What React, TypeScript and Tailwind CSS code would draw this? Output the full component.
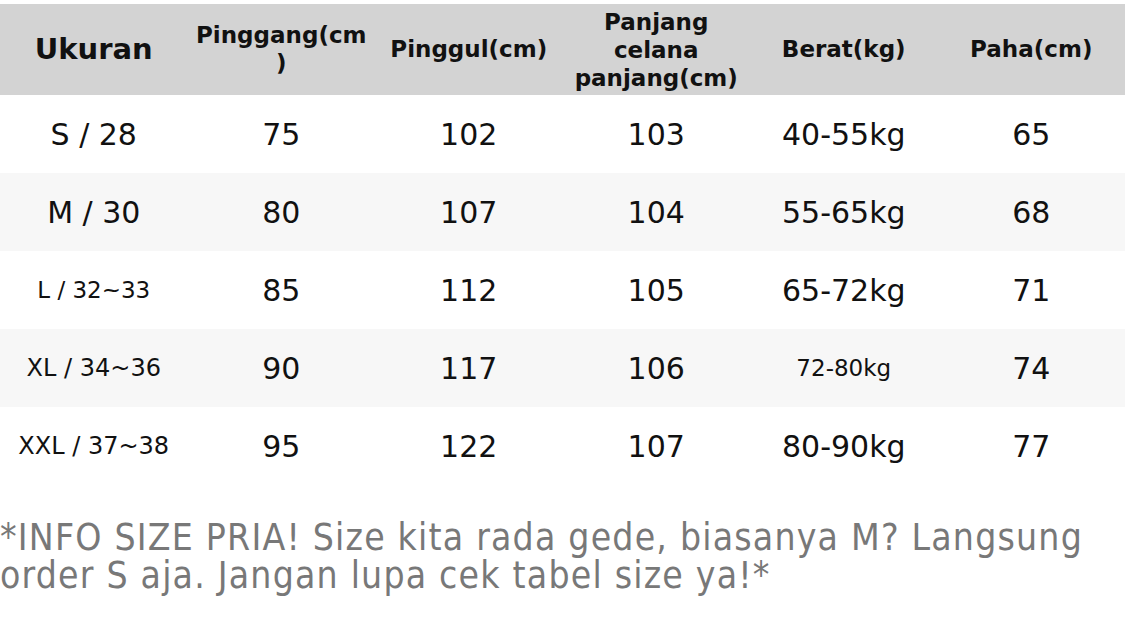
import React from "react";

const rows: { size: string; sizeCls: string; w: string; h: string; l: string; b: string; bCls: string; p: string }[] = [
  { size: "S / 28", sizeCls: "text-[30px]", w: "75", h: "102", l: "103", b: "40-55kg", bCls: "text-[30px]", p: "65" },
  { size: "M / 30", sizeCls: "text-[30px]", w: "80", h: "107", l: "104", b: "55-65kg", bCls: "text-[30px]", p: "68" },
  { size: "L / 32~33", sizeCls: "text-[23px]", w: "85", h: "112", l: "105", b: "65-72kg", bCls: "text-[30px]", p: "71" },
  { size: "XL / 34~36", sizeCls: "text-[24px]", w: "90", h: "117", l: "106", b: "72-80kg", bCls: "text-[23px]", p: "74" },
  { size: "XXL / 37~38", sizeCls: "text-[24px]", w: "95", h: "122", l: "107", b: "80-90kg", bCls: "text-[30px]", p: "77" },
];

export default function App() {
  return (
    <div className="w-[1125px] h-[625px] bg-white overflow-hidden" style={{ fontFamily: '"DejaVu Sans", sans-serif' }}>
      <div className="pt-[4px]">
        <div className="grid grid-cols-6 h-[91px] bg-[#d3d3d3] text-[#111] font-bold items-center text-center">
          <div className="text-[29px]">Ukuran</div>
          <div className="text-[23px] leading-[28px] whitespace-nowrap -mt-[2px]">Pinggang(cm<br />)</div>
          <div className="text-[23px]">Pinggul(cm)</div>
          <div className="text-[23px] leading-[28px]">Panjang<br />celana<br />panjang(cm)</div>
          <div className="text-[23px]">Berat(kg)</div>
          <div className="text-[23px]">Paha(cm)</div>
        </div>
        {rows.map((r, i) => (
          <div key={i} className={`grid grid-cols-6 h-[78px] items-center text-center text-[#111] ${i % 2 === 1 ? "bg-[#f7f7f7]" : "bg-white"}`}>
            <div className={r.sizeCls}>{r.size}</div>
            <div className="text-[30px]">{r.w}</div>
            <div className="text-[30px]">{r.h}</div>
            <div className="text-[30px]">{r.l}</div>
            <div className={r.bCls}>{r.b}</div>
            <div className="text-[30px]">{r.p}</div>
          </div>
        ))}
        <div className="mt-[34px] text-[37px] leading-[38px] tracking-[1.2px] text-[#787878] whitespace-nowrap" style={{ fontFamily: '"DejaVu Sans Condensed", "DejaVu Sans", sans-serif', fontStretch: "condensed" }}>
          *INFO SIZE PRIA! Size kita rada gede, biasanya M? Langsung<br />order S aja. Jangan lupa cek tabel size ya!*
        </div>
      </div>
    </div>
  );
}
